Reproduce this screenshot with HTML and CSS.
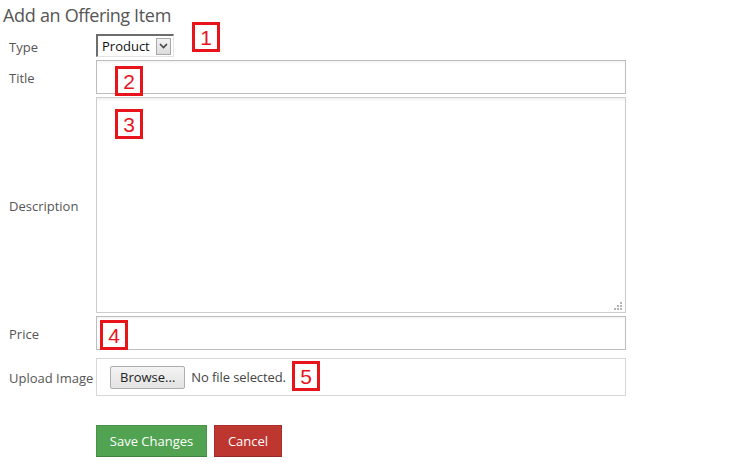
FILE: index.html
```html
<!DOCTYPE html>
<html lang="en">
<head>
  <meta charset="UTF-8">
  <title>Add an Offering Item</title>
  <link rel="stylesheet" href="styles.css">
</head>
<body>
  <div class="page">
    <h1 class="page-title">Add an <span class="alt">Offering</span> Item</h1>

    <form class="offer-form">
      <div class="row row-type">
        <label class="label">Type</label>
        <div class="field field-inline">
          <span class="select-box">
            <span class="select-value">Product</span>
            <span class="select-arrow">
              <svg width="9" height="6" viewBox="0 0 9 6"><path d="M1 1 L4.5 4.5 L8 1" fill="none" stroke="#444" stroke-width="1.6"/></svg>
            </span>
          </span>
          <span class="badge badge-inline">1</span>
        </div>
      </div>

      <div class="row row-title">
        <label class="label">Title</label>
        <div class="field">
          <div class="input"></div>
          <span class="badge badge-2">2</span>
        </div>
      </div>

      <div class="row row-desc">
        <label class="label">Description</label>
        <div class="field">
          <div class="textarea">
            <span class="grip">
              <svg width="8" height="8" viewBox="0 0 8 8" fill="#b5b5b5">
                <rect x="6" y="0" width="2" height="2"/>
                <rect x="3" y="3" width="2" height="2"/><rect x="6" y="3" width="2" height="2"/>
                <rect x="0" y="6" width="2" height="2"/><rect x="3" y="6" width="2" height="2"/><rect x="6" y="6" width="2" height="2"/>
              </svg>
            </span>
          </div>
          <span class="badge badge-3">3</span>
        </div>
      </div>

      <div class="row row-price">
        <label class="label">Price</label>
        <div class="field">
          <div class="input"></div>
          <span class="badge badge-4">4</span>
        </div>
      </div>

      <div class="row row-file">
        <label class="label">Upload Image</label>
        <div class="field">
          <div class="file-box">
            <span class="browse">Browse...</span>
            <span class="no-file">No file selected.</span>
            <span class="badge badge-5">5</span>
          </div>
        </div>
      </div>

      <div class="actions">
        <button type="button" class="btn btn-save">Save Changes</button>
        <button type="button" class="btn btn-cancel">Cancel</button>
      </div>
    </form>
  </div>
</body>
</html>
```

FILE: styles.css
```css
body {
  margin: 0;
  background: #fff;
  font-family: 'Open Sans', 'Noto Sans', sans-serif;
  color: #555;
}

.page {
  width: 734px;
  padding: 3px 0 0 3px;
  box-sizing: border-box;
}

.page-title {
  font-size: 18px;
  font-weight: normal;
  color: #555;
  margin: 0;
  line-height: 24px;
  letter-spacing: -0.3px;
}

.page-title .alt {
  letter-spacing: -0.5px;
}

.offer-form {
  padding-left: 6px;
  margin-top: 7px;
}

.row {
  display: flex;
  align-items: center;
  margin-bottom: 3px;
}

.label {
  width: 87px;
  flex: none;
  font-size: 13px;
  color: #555;
  padding-top: 2px;
}

.field {
  position: relative;
  width: 530px;
}

.field-inline {
  display: flex;
  align-items: flex-start;
  height: 23px;
}

.select-box {
  display: flex;
  align-items: center;
  width: 78px;
  height: 23px;
  box-sizing: border-box;
  border-top: 2px solid #6d6d6d;
  border-left: 2px solid #6d6d6d;
  border-right: 1px solid #e4e4e4;
  border-bottom: 1px solid #e4e4e4;
  background: #fff;
}

.select-value {
  flex: 1;
  font-size: 13px;
  color: #111;
  padding-left: 4px;
}

.select-arrow {
  width: 15px;
  height: 17px;
  margin-right: 2px;
  box-sizing: border-box;
  border: 1px solid #a9a9a9;
  background: linear-gradient(#f2f2f2, #dcdcdc);
  display: flex;
  align-items: center;
  justify-content: center;
}

.badge {
  display: inline-flex;
  align-items: center;
  justify-content: center;
  width: 28px;
  height: 30px;
  box-sizing: border-box;
  border: 3px solid #e8141c;
  background: #fff;
  color: #e8141c;
  font-family: 'Liberation Sans', Arial, sans-serif;
  font-size: 21px;
  line-height: 1;
}

.badge-inline {
  margin-left: 18px;
  margin-top: -12px;
}

.badge-2 { position: absolute; left: 19px; top: 6px; }
.badge-3 { position: absolute; left: 19px; top: 12px; }
.badge-4 { position: absolute; left: 4px; top: 4px; }
.badge-5 { position: absolute; left: 195px; top: 2px; }

.input {
  height: 34px;
  box-sizing: border-box;
  border: 1px solid #bdbdbd;
  box-shadow: inset 0 2px 2px rgba(0, 0, 0, 0.04);
  background: #fff;
}

.textarea {
  position: relative;
  height: 216px;
  box-sizing: border-box;
  border: 1px solid #cdcdcd;
  box-shadow: inset 0 2px 2px rgba(0, 0, 0, 0.05);
  background: #fff;
}

.grip {
  position: absolute;
  right: 3px;
  bottom: 2px;
  line-height: 0;
}

.row-price {
  margin-bottom: 8px;
}

.file-box {
  position: relative;
  display: flex;
  align-items: center;
  height: 38px;
  box-sizing: border-box;
  border: 1px solid #d6d6d6;
  padding-left: 13px;
}

.browse {
  display: inline-block;
  height: 23px;
  line-height: 21px;
  box-sizing: border-box;
  padding: 0 9px;
  font-size: 13px;
  color: #222;
  border: 1px solid #adadad;
  border-radius: 2px;
  background: linear-gradient(#f3f3f3, #e3e3e3);
}

.no-file {
  font-size: 13px;
  color: #444;
  margin-left: 6px;
  letter-spacing: -0.1px;
}

.actions {
  display: flex;
  gap: 7px;
  margin-left: 87px;
  margin-top: 29px;
}

.btn {
  height: 32px;
  border: 1px solid transparent;
  font-family: 'Open Sans', 'Noto Sans', sans-serif;
  font-size: 13px;
  color: #fff;
  padding: 0;
  white-space: nowrap;
  cursor: pointer;
}

.btn-save {
  width: 111px;
  background: #51a351;
  border-color: #499249;
  border-bottom-color: #3f803f;
}

.btn-cancel {
  width: 68px;
  background: #bd362f;
  border-color: #a9302a;
  border-bottom-color: #942a25;
}
```
